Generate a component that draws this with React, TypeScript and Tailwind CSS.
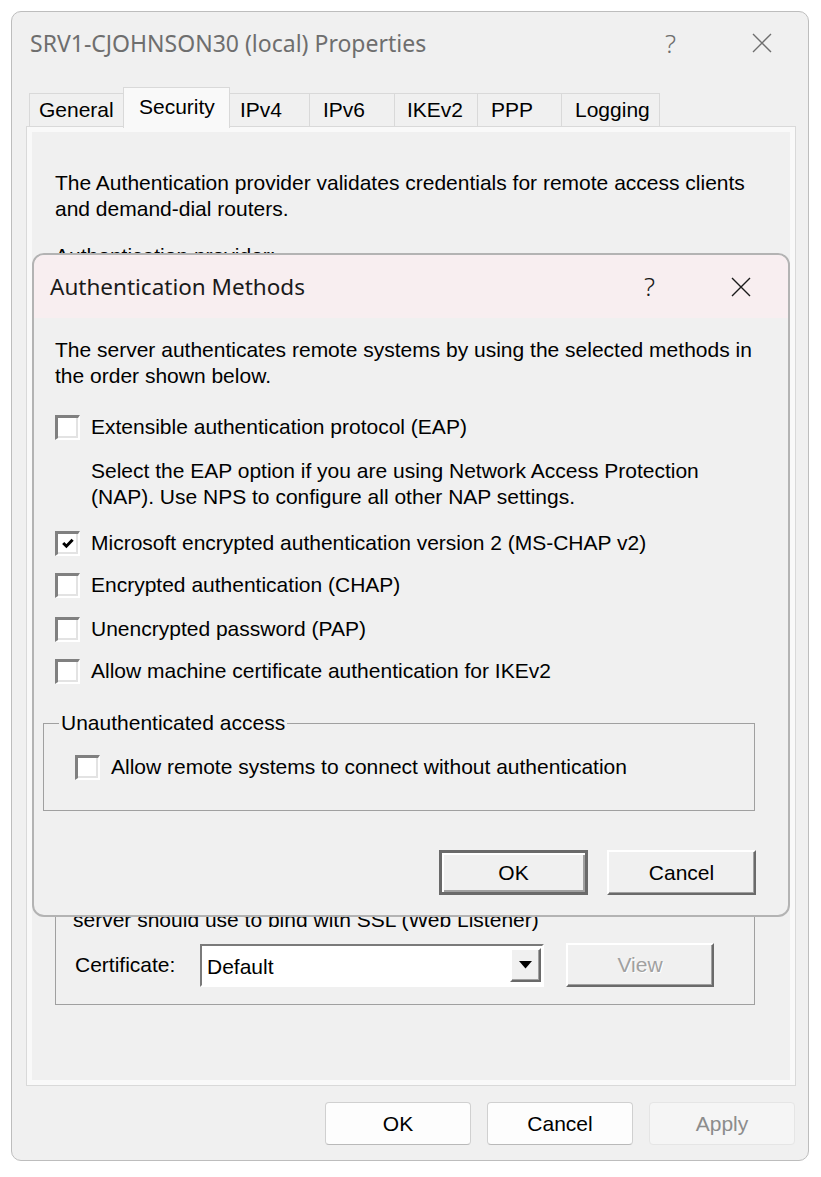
import React from "react";

const tabs = [
  { label: "General", cls: "w-[95px] pl-[9px]" },
  { label: "Security", cls: "w-[107px] pl-[15px]", active: true },
  { label: "IPv4", cls: "w-[81px] pl-[10px]" },
  { label: "IPv6", cls: "w-[86px] pl-[13px]" },
  { label: "IKEv2", cls: "w-[84px] pl-[12px]" },
  { label: "PPP", cls: "w-[85px] pl-[13px]" },
  { label: "Logging", cls: "w-[99px] pl-[13px]" },
];

function XIcon({ className }: { className?: string }) {
  return (
    <svg width="20" height="20" viewBox="0 0 20 20" className={className}>
      <path d="M1 1L19 19M19 1L1 19" stroke="currentColor" strokeWidth="1.4" fill="none" />
    </svg>
  );
}

function Checkbox({ checked = false }: { checked?: boolean }) {
  return (
    <span className="flex h-[25px] w-[25px] shrink-0 items-center justify-center border-t-[3px] border-l-[3px] border-r-2 border-b-2 border-t-[#808080] border-l-[#808080] border-r-white border-b-white bg-white shadow-[inset_-2px_-2px_0_#e3e3e3]">
      {checked && (
        <svg width="12" height="11" viewBox="0 0 12 11">
          <path d="M1.2 5L4.4 8.2L10.6 1.8" fill="none" stroke="#000" strokeWidth="3" />
        </svg>
      )}
    </span>
  );
}

function CheckRow({ label, checked, className = "" }: { label: string; checked?: boolean; className?: string }) {
  return (
    <label className={"flex h-[26px] items-center gap-[11px] " + className}>
      <Checkbox checked={checked} />
      <span>{label}</span>
    </label>
  );
}

export default function App() {
  return (
    <div className="min-h-[1177px] bg-white pl-[11px] pt-[11px] font-['Liberation_Sans',Arial,sans-serif] text-[21px] text-black">
      <div className="relative flex h-[1150px] w-[798px] flex-col rounded-[10px] border border-[#bdbdbd] bg-[#f0f0f0]">
        {/* title bar */}
        <div className="flex h-[62px] shrink-0 items-center pl-[18px] text-[#6e6e6e]">
          <span className="font-['Noto_Sans',sans-serif] text-[23px]">SRV1-CJOHNSON30 (local) Properties</span>
          <span className="ml-auto font-['Noto_Sans',sans-serif] text-[26px] font-light">?</span>
          <XIcon className="ml-[76px] mr-[36px]" />
        </div>

        {/* tabs */}
        <div className="flex h-[52px] shrink-0 items-end pl-[18px]">
          {tabs.map((t) =>
            t.active ? (
              <div
                key={t.label}
                className={"relative z-10 -mb-[2px] -ml-px flex h-[41px] items-center border border-b-0 border-[#d9d9d9] bg-[#f9f9f9] pb-[3px] " + t.cls}
              >
                {t.label}
              </div>
            ) : (
              <div
                key={t.label}
                className={"-ml-px flex h-[33px] items-center border border-b-0 border-[#d9d9d9] bg-[#f0f0f0] " + t.cls}
              >
                {t.label}
              </div>
            )
          )}
        </div>

        {/* tab page */}
        <div className="ml-[14px] h-[960px] w-[770px] shrink-0 border border-[#d9d9d9] bg-[#f9f9f9] p-[5px]">
          <div className="h-full bg-[#f0f0f0] px-[23px] pt-[38px]">
            <p className="leading-[26px]">
              The Authentication provider validates credentials for remote access clients
              <br />
              and demand-dial routers.
            </p>
            <p className="mt-[21px] leading-[26px]">Authentication provider:</p>

            <div className="h-[590px]" />

            <div className="w-[700px] border border-[#a0a0a0] px-[17px] pb-[17px] pt-[47px]">
              <p className="leading-[26px]">server should use to bind with SSL (Web Listener)</p>
              <div className="mt-[10px] flex h-[44px] items-center">
                <span className="w-[127px] pl-[2px]">Certificate:</span>
                <div className="flex h-[43px] w-[344px] border-2 border-t-[#7a7a7a] border-l-[#7a7a7a] border-r-white border-b-white bg-white">
                  <span className="flex-1 self-center pl-[5px] pt-[3px]">Default</span>
                  <span className="my-auto mr-[1px] flex h-[34px] w-[31px] items-center justify-center border-2 border-t-white border-l-white border-r-[#6a6a6a] border-b-[#6a6a6a] bg-[#f0f0f0] shadow-[inset_-1px_-1px_0_#a0a0a0]">
                    <svg width="13" height="8" viewBox="0 0 13 8">
                      <polygon points="0,0 13,0 6.5,7.5" fill="#000" />
                    </svg>
                  </span>
                </div>
                <span className="ml-[22px] flex h-[44px] w-[148px] items-center justify-center border-2 border-t-white border-l-white border-r-[#6a6a6a] border-b-[#6a6a6a] text-[#a0a0a0] shadow-[inset_-1px_-1px_0_#a0a0a0] [text-shadow:1px_1px_0_#fff]">
                  View
                </span>
              </div>
            </div>
          </div>
        </div>

        {/* bottom buttons */}
        <div className="mt-[16px] flex justify-end gap-[16px] pr-[13px]">
          <button className="h-[43px] w-[146px] rounded-[4px] border border-[#d0d0d0] border-b-[#b9b9b9] bg-[#fdfdfd]">OK</button>
          <button className="h-[43px] w-[146px] rounded-[4px] border border-[#d0d0d0] border-b-[#b9b9b9] bg-[#fdfdfd]">Cancel</button>
          <button className="h-[43px] w-[146px] rounded-[4px] border border-[#e5e5e5] bg-[#f5f5f5] text-[#8c8c8c]">Apply</button>
        </div>

        {/* Authentication Methods dialog */}
        <div className="absolute left-[20px] top-[241px] w-[758px] overflow-hidden rounded-[12px] border-2 border-[#b3b3b3] bg-[#f0f0f0]">
          <div className="flex h-[63px] items-center bg-[#f8eef0] pl-[16px] text-[#1a1a1a]">
            <span className="font-['Noto_Sans',sans-serif] text-[22.5px]">Authentication Methods</span>
            <span className="ml-auto font-['Noto_Sans',sans-serif] text-[26px] font-light">?</span>
            <XIcon className="ml-[76px] mr-[37px]" />
          </div>
          <div className="px-[21px] pb-[20px] pt-[19px]">
            <p className="leading-[26px]">
              The server authenticates remote systems by using the selected methods in
              <br />
              the order shown below.
            </p>
            <CheckRow className="mt-[25px]" label="Extensible authentication protocol (EAP)" />
            <p className="mt-[18px] pl-[36px] leading-[26px]">
              Select the EAP option if you are using Network Access Protection
              <br />
              (NAP). Use NPS to configure all other NAP settings.
            </p>
            <CheckRow className="mt-[20px]" checked label="Microsoft encrypted authentication version 2 (MS-CHAP v2)" />
            <CheckRow className="mt-[16px]" label="Encrypted authentication (CHAP)" />
            <CheckRow className="mt-[18px]" label="Unencrypted password (PAP)" />
            <CheckRow className="mt-[16px]" label="Allow machine certificate authentication for IKEv2" />

            <fieldset className="-ml-[12px] mt-[26px] w-[712px] border border-[#a0a0a0] pb-[30px] pl-[15px]">
              <legend className="px-[2px] leading-[26px]">Unauthenticated access</legend>
              <CheckRow className="ml-[16px] mt-[18px]" label="Allow remote systems to connect without authentication" />
            </fieldset>

            <div className="mt-[39px] flex justify-end gap-[19px] pr-[11px]">
              <button className="h-[45px] w-[149px] border-[3px] border-[#6a6a6a] bg-[#f0f0f0] shadow-[inset_2px_2px_0_#fff,inset_-2px_-2px_0_#a0a0a0]">
                OK
              </button>
              <button className="h-[45px] w-[149px] border-2 border-t-white border-l-white border-r-[#6a6a6a] border-b-[#6a6a6a] bg-[#f0f0f0] shadow-[inset_-1px_-1px_0_#a0a0a0]">
                Cancel
              </button>
            </div>
          </div>
        </div>
      </div>
    </div>
  );
}
